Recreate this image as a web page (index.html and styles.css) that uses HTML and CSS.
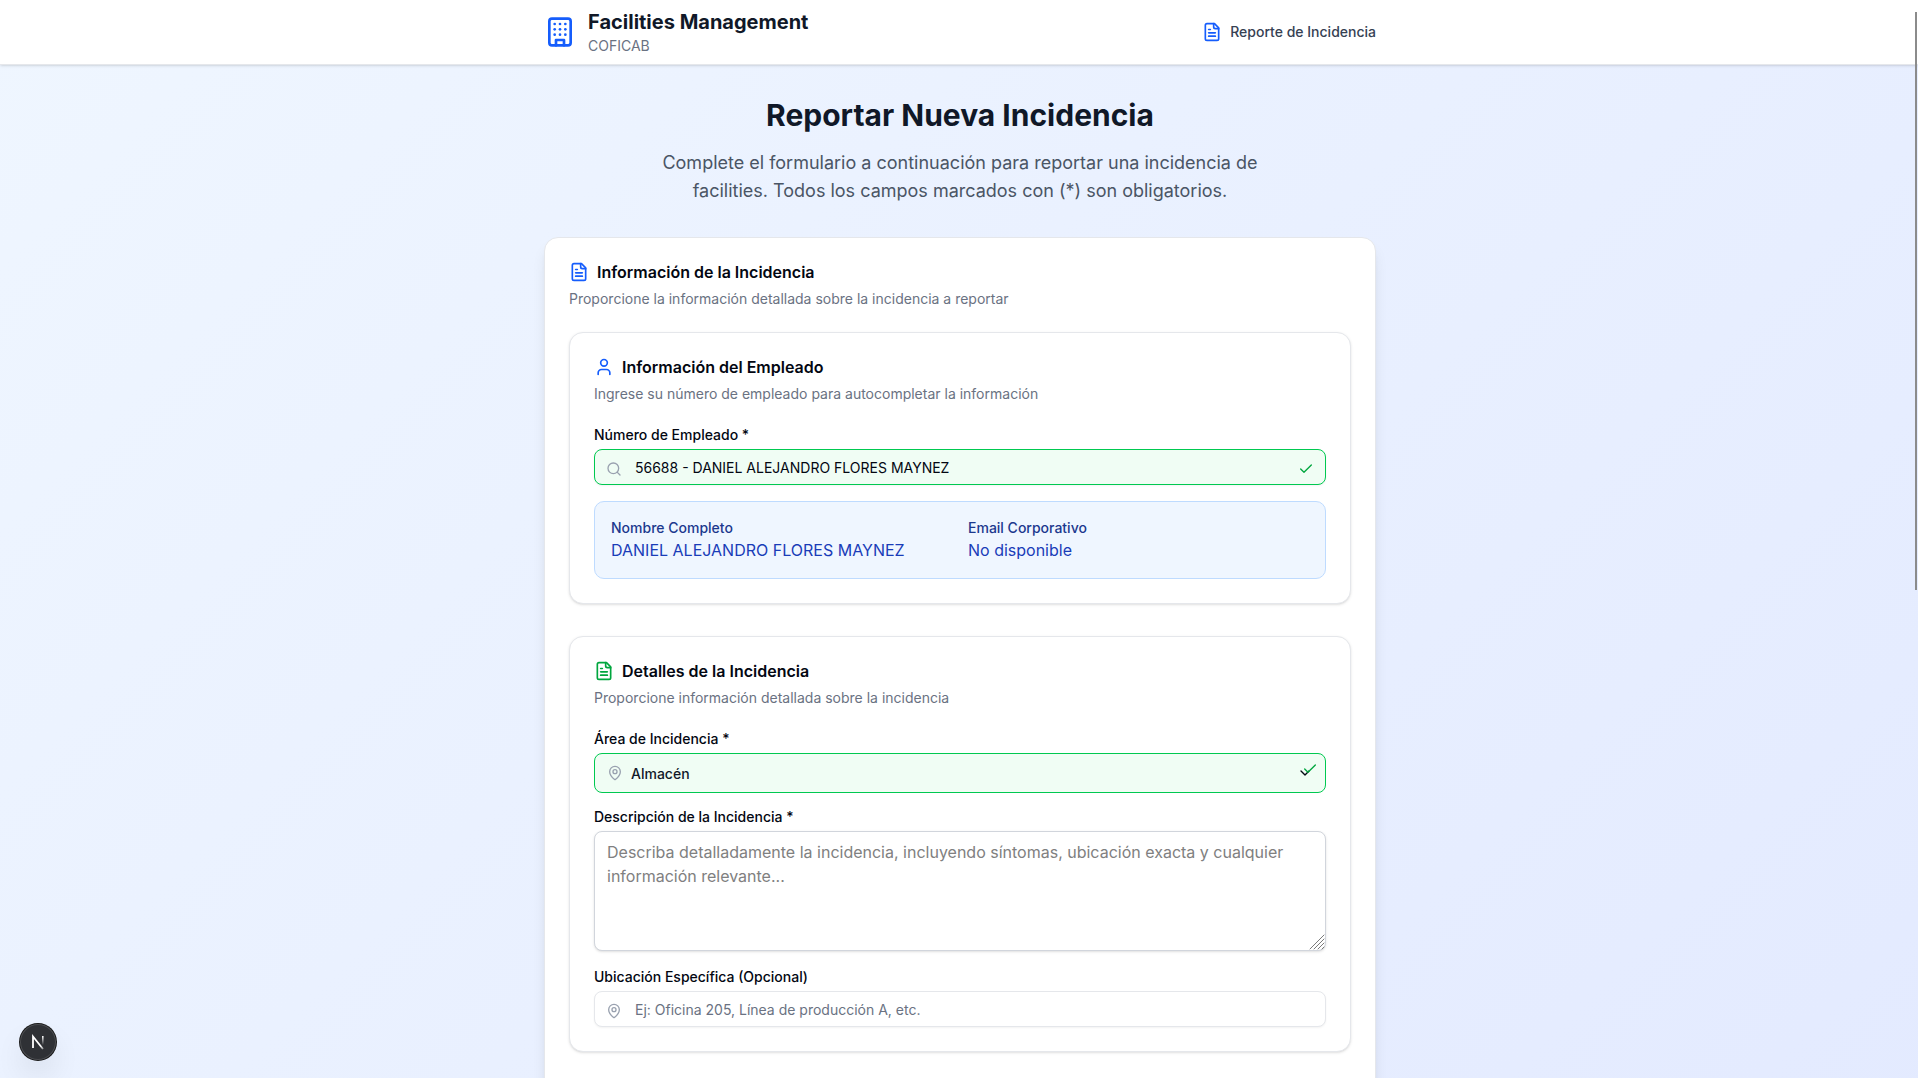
FILE: index.html
```html
<!DOCTYPE html>
<html lang="es">
<head>
<meta charset="utf-8">
<meta name="viewport" content="width=device-width, initial-scale=1">
<title>Facilities Management</title>
<link rel="stylesheet" href="styles.css">
</head>
<body>
<svg class="sprite" aria-hidden="true">
  <symbol id="file" viewBox="0 0 24 24"><path d="M15 2H6a2 2 0 0 0-2 2v16a2 2 0 0 0 2 2h12a2 2 0 0 0 2-2V7Z"/><path d="M14 2v4a2 2 0 0 0 2 2h4"/><path d="M10 9H8"/><path d="M16 13H8"/><path d="M16 17H8"/></symbol>
  <symbol id="pin" viewBox="0 0 24 24"><path d="M20 10c0 4.993-5.539 10.193-7.399 11.799a1 1 0 0 1-1.202 0C9.539 20.193 4 14.993 4 10a8 8 0 0 1 16 0"/><circle cx="12" cy="10" r="3"/></symbol>
  <symbol id="check" viewBox="0 0 24 24"><path d="M20 6 9 17l-5-5"/></symbol>
</svg>
<div class="page">
  <header class="topbar">
    <div class="container topbar-row">
      <div class="brand">
        <svg class="icon icon-lg blue" viewBox="0 0 24 24"><rect width="16" height="20" x="4" y="2" rx="2" ry="2"/><path d="M9 22v-4h6v4"/><path d="M8 6h.01"/><path d="M16 6h.01"/><path d="M12 6h.01"/><path d="M12 10h.01"/><path d="M12 14h.01"/><path d="M16 10h.01"/><path d="M16 14h.01"/><path d="M8 10h.01"/><path d="M8 14h.01"/></svg>
        <div>
          <div class="brand-name">Facilities Management</div>
          <div class="brand-company">COFICAB</div>
        </div>
      </div>
      <div class="section-name">
        <svg class="icon icon-md blue"><use href="#file"/></svg>
        <span>Reporte de Incidencia</span>
      </div>
    </div>
  </header>

  <main class="container main">
    <div class="intro">
      <h1>Reportar Nueva Incidencia</h1>
      <p>Complete el formulario a continuación para reportar una incidencia de facilities. Todos los campos marcados con (*) son obligatorios.</p>
    </div>

    <form class="card card-outer">
      <div class="card-head">
        <h2><svg class="icon icon-md blue"><use href="#file"/></svg>Información de la Incidencia</h2>
        <p>Proporcione la información detallada sobre la incidencia a reportar</p>
      </div>

      <div class="sections">
        <section class="card">
          <div class="card-head">
            <h2><svg class="icon icon-md blue" viewBox="0 0 24 24"><path d="M19 21v-2a4 4 0 0 0-4-4H9a4 4 0 0 0-4 4v2"/><circle cx="12" cy="7" r="4"/></svg>Información del Empleado</h2>
            <p>Ingrese su número de empleado para autocompletar la información</p>
          </div>
          <div class="fields">
            <div class="field">
              <label for="employee">Número de Empleado *</label>
              <div class="control">
                <svg class="icon icon-sm gray lead" viewBox="0 0 24 24"><path d="m21 21-4.340-4.340"/><circle cx="11" cy="11" r="8"/></svg>
                <input class="input valid" id="employee" type="text" value="56688 - DANIEL ALEJANDRO FLORES MAYNEZ">
                <svg class="icon icon-sm green trail"><use href="#check"/></svg>
              </div>
            </div>
            <dl class="employee">
              <div><dt>Nombre Completo</dt><dd>DANIEL ALEJANDRO FLORES MAYNEZ</dd></div>
              <div><dt>Email Corporativo</dt><dd>No disponible</dd></div>
            </dl>
          </div>
        </section>

        <section class="card">
          <div class="card-head">
            <h2><svg class="icon icon-md green"><use href="#file"/></svg>Detalles de la Incidencia</h2>
            <p>Proporcione información detallada sobre la incidencia</p>
          </div>
          <div class="fields">
            <div class="field">
              <label for="area">Área de Incidencia *</label>
              <div class="control">
                <svg class="icon icon-sm gray select-lead"><use href="#pin"/></svg>
                <select class="select valid" id="area"><option>Almacén</option></select>
                <svg class="icon icon-sm chevron" viewBox="0 0 24 24"><path d="m6 9 6 6 6-6"/></svg>
                <svg class="icon icon-sm green select-check"><use href="#check"/></svg>
              </div>
            </div>
            <div class="field field-text">
              <label for="description">Descripción de la Incidencia *</label>
              <div class="control">
                <textarea id="description" placeholder="Describa detalladamente la incidencia, incluyendo síntomas, ubicación exacta y cualquier información relevante..."></textarea>
                <svg class="icon icon-sm grip" viewBox="0 0 16 16"><path d="M1 15 15 1M5 15 15 5M9 15l6-6M13 15l2-2"/></svg>
              </div>
            </div>
            <div class="field">
              <label for="location">Ubicación Específica (Opcional)</label>
              <div class="control">
                <svg class="icon icon-sm gray lead"><use href="#pin"/></svg>
                <input class="input" id="location" type="text" placeholder="Ej: Oficina 205, Línea de producción A, etc.">
              </div>
            </div>
          </div>
        </section>
      </div>
    </form>
  </main>
</div>

<button class="dev-badge" type="button" aria-label="Next.js">
  <svg width="40" height="40" viewBox="0 0 40 40" fill="none">
    <defs>
      <linearGradient id="diag" x1="17" y1="18" x2="26" y2="28" gradientUnits="userSpaceOnUse"><stop offset="0.600" stop-color="#fff"/><stop offset="1" stop-color="#fff" stop-opacity="0.300"/></linearGradient>
      <linearGradient id="stem" x1="0" y1="14" x2="0" y2="23" gradientUnits="userSpaceOnUse"><stop stop-color="#fff"/><stop offset="1" stop-color="#fff" stop-opacity="0"/></linearGradient>
    </defs>
    <path d="M15 26V14.500L25 27" stroke="url(#diag)" stroke-width="1.800"/>
    <path d="M24 14h1.600v9H24z" fill="url(#stem)"/>
  </svg>
</button>
<div class="scroll-thumb" aria-hidden="true"></div>
</body>
</html>
```
FILE: styles.css
```css
*, *::before, *::after { box-sizing: border-box; }

html { scrollbar-width: none; }

body {
  margin: 0;
  font-family: Inter, "Liberation Sans", sans-serif;
  font-size: 16px;
  line-height: 24px;
  color: #030712;
}

h1, h2, p, dl, dd { margin: 0; }

.sprite { display: none; }

.page {
  display: flex;
  flex-direction: column;
  min-height: 182vh;
  background: linear-gradient(to bottom right, #eff6ff, #e0e7ff);
}

.container {
  width: 100%;
  max-width: 896px;
  margin: 0 auto;
  padding: 0 31px 0 33px;
}

/* Icons */
.icon {
  flex: none;
  fill: none;
  stroke: currentColor;
  stroke-width: 2;
  stroke-linecap: round;
  stroke-linejoin: round;
}
.icon-sm { width: 16px; height: 16px; }
.icon-md { width: 20px; height: 20px; }
.icon-lg { width: 32px; height: 32px; }
.blue { color: #155dfc; }
.green { color: #00a63e; }
.gray { color: #99a1af; }

/* Header */
.topbar {
  background: #fff;
  border-bottom: 1px solid #e5e7eb;
  box-shadow: 0 1px 3px rgba(0, 0, 0, 0.1), 0 1px 2px -1px rgba(0, 0, 0, 0.1);
}
.topbar-row {
  display: flex;
  align-items: center;
  justify-content: space-between;
  min-height: 64px;
}
.brand { display: flex; align-items: center; gap: 12px; }
.brand-name { font-size: 20px; line-height: 28px; font-weight: 700; color: #101828; }
.brand-company { font-size: 14px; line-height: 20px; color: #6a7282; }
.section-name {
  display: flex;
  align-items: center;
  gap: 8px;
  font-size: 14px;
  line-height: 20px;
  font-weight: 500;
  color: #364153;
}

/* Intro */
.main {
  display: flex;
  flex: 1;
  flex-direction: column;
  gap: 32px;
  padding-top: 32px;
  padding-bottom: 32px;
}
.intro { text-align: center; }
.intro h1 {
  margin-bottom: 16px;
  font-size: 30px;
  line-height: 36px;
  font-weight: 700;
  color: #101828;
}
.intro p {
  max-width: 672px;
  margin: 0 auto;
  font-size: 18px;
  line-height: 28px;
  color: #4a5565;
}

/* Cards */
.card {
  display: flex;
  flex-direction: column;
  gap: 24px;
  padding: 24px;
  background: #fff;
  border: 1px solid #e5e7eb;
  border-radius: 14px;
  box-shadow: 0 1px 3px rgba(0, 0, 0, 0.1), 0 1px 2px -1px rgba(0, 0, 0, 0.1);
}
.card-outer {
  flex: 1;
  box-shadow: 0 10px 15px -3px rgba(0, 0, 0, 0.1), 0 4px 6px -4px rgba(0, 0, 0, 0.1);
}
.card-head { display: flex; flex-direction: column; gap: 8px; }
.card-head h2 {
  display: flex;
  align-items: center;
  gap: 8px;
  font-size: 16px;
  line-height: 20px;
  font-weight: 600;
}
.card-head p { font-size: 14px; line-height: 18px; color: #6a7282; }
.sections { display: flex; flex-direction: column; gap: 32px; }

/* Fields */
.fields { display: flex; flex-direction: column; gap: 16px; }
.field { display: flex; flex-direction: column; gap: 6px; }
.field-text { margin-bottom: 2px; }
label { font-size: 14px; line-height: 16px; font-weight: 500; }

.control { position: relative; display: flex; }
.control .icon { position: absolute; pointer-events: none; }
.lead { top: 12px; left: 12px; }
.trail { top: 12px; right: 12px; }
.select-lead { top: 12px; left: 13px; }
.chevron { top: 12px; right: 13px; }
.select-check { top: 8px; right: 8px; }
.grip { right: 1px; bottom: 1px; color: #7a7a7a; }
.control .grip { stroke-width: 1; }

.input, .select, textarea {
  width: 100%;
  margin: 0;
  font-family: inherit;
  color: #030712;
  background: #fff;
  border: 1px solid #e5e7eb;
  border-radius: 8px;
  outline: none;
}
.input {
  height: 36px;
  padding: 4px 40px;
  font-size: 14px;
  line-height: 20px;
  box-shadow: 0 1px 2px rgba(0, 0, 0, 0.05);
}
.input::placeholder { color: #6a7282; opacity: 1; }
.select {
  height: 40px;
  padding: 10px 36px 8px;
  appearance: none;
  font-size: 14px;
  line-height: 20px;
  font-weight: 500;
  color: #101828;
}
.input.valid, .select.valid { background: #f0fdf4; border-color: #00c950; }
textarea {
  display: block;
  height: 120px;
  padding: 8px 12px;
  font-size: 16px;
  line-height: 24px;
  border-color: #d1d5dc;
  box-shadow: 0 1px 3px rgba(0, 0, 0, 0.1), 0 1px 2px -1px rgba(0, 0, 0, 0.1);
  resize: vertical;
}
textarea::placeholder { color: #808080; opacity: 1; }
textarea::-webkit-resizer { background: transparent; }

/* Employee summary */
.employee {
  display: grid;
  grid-template-columns: 1fr 1fr;
  gap: 16px;
  padding: 16px;
  color: #193cb8;
  background: #eff6ff;
  border: 1px solid #bedbff;
  border-radius: 10px;
}
.employee dt { font-size: 14px; line-height: 20px; font-weight: 500; color: #1c398e; }

/* Floating overlays */
.dev-badge {
  position: fixed;
  left: 20px;
  bottom: 18px;
  display: flex;
  align-items: center;
  justify-content: center;
  width: 36px;
  height: 36px;
  padding: 0;
  background: #2f3135;
  border: 0;
  border-radius: 50%;
  box-shadow: 0 0 0 1px #171717, inset 0 0 0 1px rgba(255, 255, 255, 0.14), 0 16px 32px -8px rgba(0, 0, 0, 0.24);
}
.dev-badge svg { flex: none; }
.scroll-thumb {
  position: fixed;
  top: 12px;
  right: 1px;
  width: 2px;
  height: 53.6vh;
  background: #8b8b8b;
}
```
